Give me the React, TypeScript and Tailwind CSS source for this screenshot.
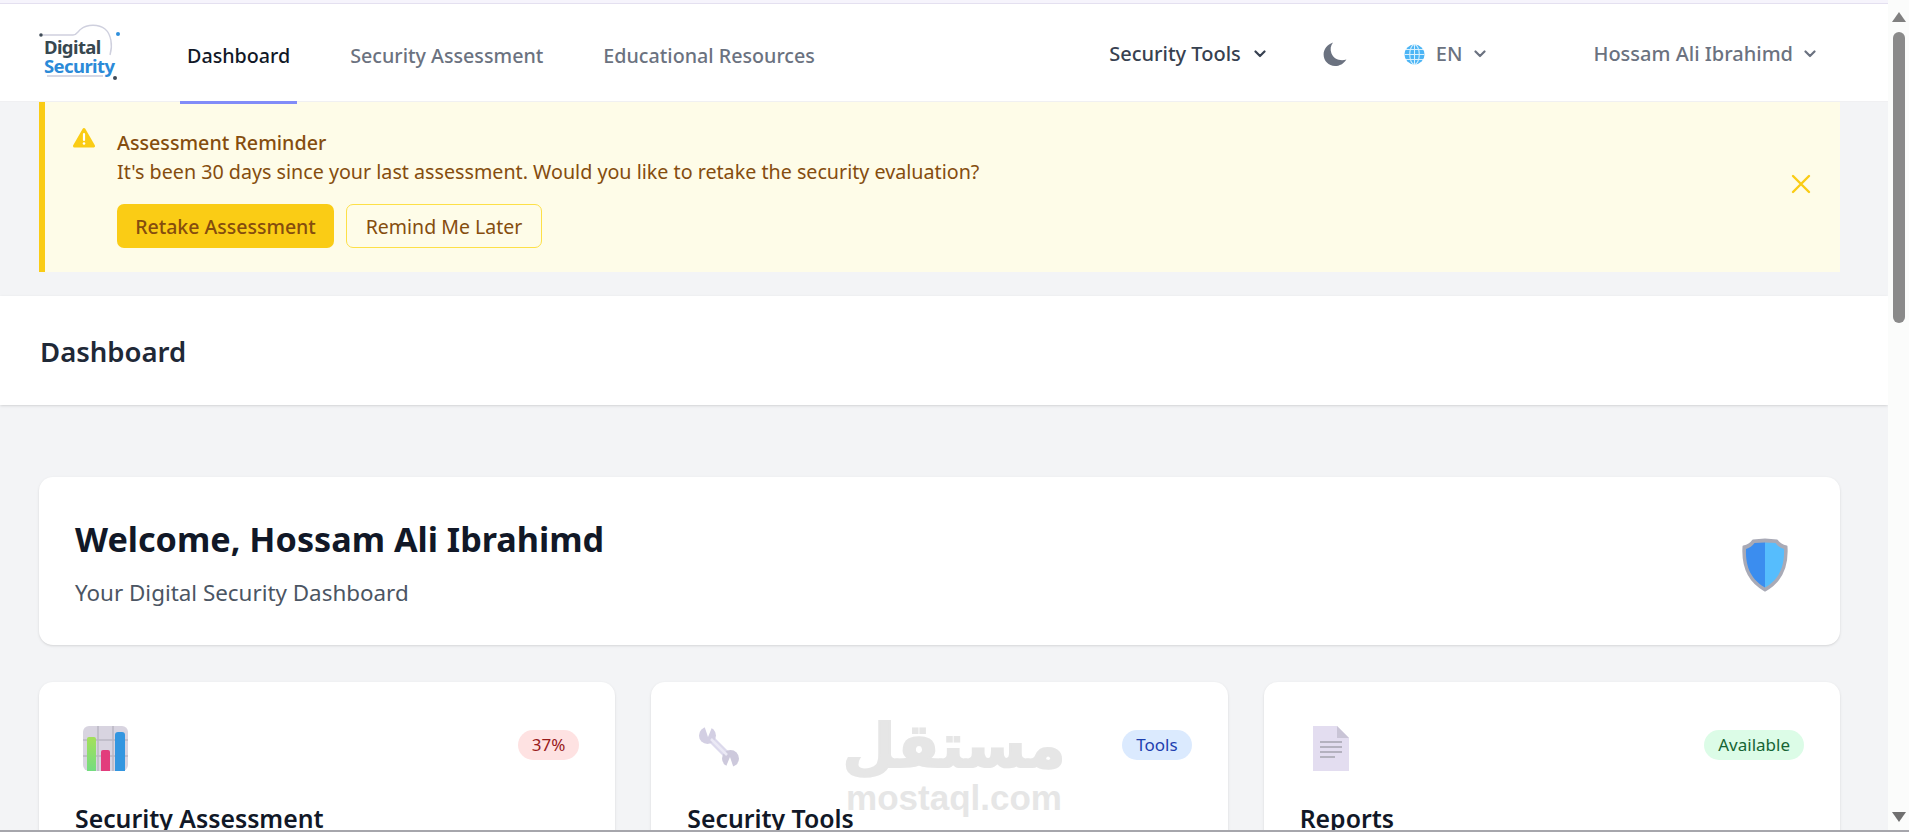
import { ReactNode } from 'react';

const font = { fontFamily: '"Noto Sans", "Open Sans", sans-serif' };

function Chevron({ className }: { className?: string }) {
  return (
    <svg viewBox="0 0 12 8" className={className} fill="none" stroke="currentColor" strokeWidth="2.2" strokeLinecap="round" strokeLinejoin="round">
      <path d="M1.5 1.5L6 6l4.5-4.5" />
    </svg>
  );
}

function Logo() {
  return (
    <div className="relative w-[84px] h-[60px] shrink-0">
      <svg viewBox="0 0 84 60" className="absolute inset-0 w-full h-full">
        <path d="M4 12H34C38 12 39 8 42 6C48 1 60 1 66 6C72 11 74 22 71 32" fill="none" stroke="#cfd0de" strokeWidth="1.4" />
        <path d="M8 53H64" stroke="#c9cbdc" strokeWidth="1.6" />
        <circle cx="2" cy="12" r="1.8" fill="#3f4b57" />
        <circle cx="79" cy="11" r="2" fill="#2f8fdc" />
        <circle cx="76" cy="55" r="2" fill="#3f4b57" />
      </svg>
      <div className="absolute left-[5px] top-[14px] font-bold tracking-[-0.6px]">
        <div className="text-[18.5px] h-[19px] leading-[19px] text-[#37474f]">Digital</div>
        <div className="text-[18.5px] h-[19px] leading-[19px] text-[#2b8ad8]">Security</div>
      </div>
    </div>
  );
}

function WarningIcon() {
  return (
    <svg viewBox="0 0 22 21" className="w-[22px] h-[22px] -mt-[1px]">
      <path d="M11 2L20.5 18.5H1.5Z" fill="#facc15" stroke="#facc15" strokeWidth="3" strokeLinejoin="round" />
      <path d="M11 6.5V12.5" stroke="#fff" strokeWidth="2.2" strokeLinecap="round" />
      <circle cx="11" cy="16" r="1.3" fill="#fff" />
    </svg>
  );
}

function GlobeIcon() {
  return (
    <svg viewBox="0 0 22 22" className="w-[21px] h-[21px]" fill="none">
      <circle cx="11" cy="11" r="10.5" fill="#4db5f5" />
      <g stroke="#d9f1fe" strokeWidth="1.1">
        <ellipse cx="11" cy="11" rx="5" ry="10.5" />
        <path d="M11 .5v21M.5 11h21M2 5.8h18M2 16.2h18" />
      </g>
    </svg>
  );
}

function MoonIcon() {
  return (
    <svg viewBox="0 0 24 24" className="w-[24px] h-[24px]">
      <path d="M10 0.5C4.2 2.6 0.6 7.2 0.6 12.6C0.6 19 5.6 24 12 24C16.6 24 20.6 21.6 23.4 17.4C17.4 19.6 10.6 17 8.4 11.2C7 7.4 7.6 3.6 10 0.5Z" fill="#6b7280" />
    </svg>
  );
}

function ShieldIcon() {
  return (
    <svg viewBox="0 0 46 54" className="w-[46px] h-[54px] mt-[7px]">
      <path d="M23 1.5L11 2.5C9 5.5 6 7.5 1.5 8.5C0.5 24 3.5 42 23 52.5C42.5 42 45.5 24 44.5 8.5C40 7.5 37 5.5 35 2.5Z" fill="#a9aab6" stroke="#a9aab6" strokeLinejoin="round" strokeWidth="2" />
      <path d="M23 4.5L12.5 5C10.5 8 7.5 10 4 11C3.5 25 6.5 40 23 49.5Z" fill="#3b8def" />
      <path d="M23 4.5L33.5 5C35.5 8 38.5 10 42 11C42.5 25 39.5 40 23 49.5Z" fill="#56bdfd" />
    </svg>
  );
}

function ChartIcon() {
  return (
    <svg viewBox="0 0 45 45" className="w-[45px] h-[45px] ml-[8px]">
      <defs>
        <linearGradient id="greenBar" x1="0" y1="0" x2="0" y2="1">
          <stop offset="0" stopColor="#a4e05a" />
          <stop offset="1" stopColor="#74dc80" />
        </linearGradient>
      </defs>
      <rect width="45" height="45" rx="6" fill="#d8d4e0" />
      <path d="M15 0v45M30 0v45M0 14h45M0 30h45" stroke="#b9b6c2" strokeWidth="1.5" />
      <path d="M4 13a2 2 0 012-2h5a2 2 0 012 2v32H4z" fill="url(#greenBar)" />
      <path d="M18 26a2 2 0 012-2h5a2 2 0 012 2v19H18z" fill="#e23d7c" />
      <path d="M32 9a3 3 0 013-3h4a3 3 0 013 3v36H32z" fill="#3396e0" />
    </svg>
  );
}

function WrenchIcon() {
  return (
    <svg viewBox="0 0 42 42" className="w-[42px] h-[42px] ml-[11px]">
      <path d="M10 10L32 32" stroke="#dcd9ec" strokeWidth="7" />
      <circle cx="9.5" cy="9.5" r="8.5" fill="#d3cfe3" />
      <circle cx="32.5" cy="32.5" r="8.5" fill="#cdc9dc" />
      <path d="M10 11L6 -1H15Z" fill="#fff" />
      <path d="M32 31L36 43H27Z" fill="#fff" />
      <path d="M13 13L29 29" stroke="#ebe9f5" strokeWidth="2.5" />
    </svg>
  );
}

function DocIcon() {
  return (
    <svg viewBox="0 0 36 45" className="w-[36px] h-[45px] ml-[13px]">
      <path d="M0 0H24L36 12V45H0Z" fill="#e3ddf0" />
      <path d="M24 0L36 12H24Z" fill="#c9c4d6" />
      <path d="M7 16H29M7 21H29M7 26H29" stroke="#a5a3ae" strokeWidth="1.5" />
      <path d="M7 31H22" stroke="#a5a3ae" strokeWidth="1.5" />
    </svg>
  );
}

function NavTab({ label, active }: { label: string; active?: boolean }) {
  return (
    <div className={`relative flex items-center h-full px-[7px] pt-[7px] text-[19.7px] font-medium ${active ? 'text-[#111827]' : 'text-[#6b7280]'}`}>
      {label}
      {active && <span className="absolute left-0 right-0 -bottom-[3px] h-[3px] bg-[#818cf8]" />}
    </div>
  );
}

function Badge({ className, children }: { className: string; children: ReactNode }) {
  return <span className={`mt-[4px] h-[30px] flex items-center rounded-full px-[14px] text-[17px] ${className}`}>{children}</span>;
}

function FeatureCard({ icon, badge, title }: { icon: ReactNode; badge: ReactNode; title: string }) {
  return (
    <div className="bg-white rounded-t-[14px] h-[200px] px-[36px] pt-[44px] shadow-sm">
      <div className="flex justify-between items-start h-[44px]">
        {icon}
        {badge}
      </div>
      <h3 className="mt-[32px] text-[24.8px] leading-[32px] font-semibold text-[#111827]">{title}</h3>
    </div>
  );
}

export default function App() {
  return (
    <div className="relative flex w-full h-screen overflow-hidden bg-[#f3f4f6]" style={font}>
      <div className="flex-1 min-w-0 h-full overflow-hidden">
        {/* Strip above the nav */}
        <div className="h-[4px] bg-[#f6f4fc] border-b border-[#e4e0f0]" />

        {/* Nav */}
        <nav className="flex items-center h-[98px] bg-white border-b border-[#f0f0f2] pl-[39px] pr-[72px]">
          <Logo />
          <div className="flex items-center h-full ml-[57px] gap-[46px]">
            <NavTab label="Dashboard" active />
            <NavTab label="Security Assessment" />
            <NavTab label="Educational Resources" />
          </div>
          <div className="ml-auto flex items-center mt-[3px] text-[20px] font-medium">
            <span className="text-[#374151]">Security Tools</span>
            <Chevron className="w-[12px] h-[8px] ml-[13px] text-[#374151]" />
            <span className="ml-[57px]"><MoonIcon /></span>
            <span className="ml-[57px]"><GlobeIcon /></span>
            <span className="ml-[11px] text-[#6b7280]">EN</span>
            <Chevron className="w-[12px] h-[8px] ml-[12px] text-[#6b7280]" />
            <span className="ml-[107px] text-[#6b7280]">Hossam Ali Ibrahimd</span>
            <Chevron className="w-[12px] h-[8px] ml-[11px] text-[#6b7280]" />
          </div>
        </nav>

        {/* Reminder */}
        <div className="ml-[39px] mr-[48px] h-[170px] flex bg-[#fefce8] border-l-[6px] border-[#facc15] pl-[28px] pr-[28px] pt-[26px]">
          <WarningIcon />
          <div className="ml-[22px] flex-1 text-[#854d0e]">
            <p className="text-[19.7px] leading-[30px] font-medium">Assessment Reminder</p>
            <p className="text-[19.7px] leading-[28px]">It's been 30 days since your last assessment. Would you like to retake the security evaluation?</p>
            <div className="flex gap-[12px] mt-[18px]">
              <button className="h-[44px] w-[217px] pt-[1px] rounded-[7px] bg-[#facc15] text-[19.5px] font-medium text-[#854d0e]">Retake Assessment</button>
              <button className="h-[44px] w-[196px] pt-[2px] rounded-[7px] border border-[#fde047] text-[19.5px] text-[#854d0e]">Remind Me Later</button>
            </div>
          </div>
          <svg viewBox="0 0 20 20" className="w-[20px] h-[20px] mt-[46px] mr-[1px]" stroke="#facc15" strokeWidth="2.4" strokeLinecap="round">
            <path d="M2 2l16 16M18 2L2 18" />
          </svg>
        </div>

        {/* Page header */}
        <header className="mt-[24px] h-[109px] flex items-center bg-white shadow-sm pl-[40px] pt-[2px]">
          <h1 className="text-[27.5px] font-semibold text-[#1f2937]">Dashboard</h1>
        </header>

        <main className="mt-[72px] pl-[39px] pr-[48px]">
          {/* Welcome */}
          <section className="h-[168px] flex items-center justify-between bg-white rounded-[14px] shadow-sm pl-[36px] pr-[52px]">
            <div className="pt-[3px]">
              <h2 className="text-[34.2px] leading-[44px] font-bold text-[#111827]">Welcome, Hossam Ali Ibrahimd</h2>
              <p className="mt-[17px] text-[22.4px] leading-[30px] text-[#4b5563]">Your Digital Security Dashboard</p>
            </div>
            <ShieldIcon />
          </section>

          {/* Feature cards */}
          <div className="grid grid-cols-3 gap-[36px] mt-[37px]">
            <FeatureCard icon={<ChartIcon />} title="Security Assessment" badge={<Badge className="bg-[#fee2e2] text-[#991b1b]">37%</Badge>} />
            <FeatureCard icon={<WrenchIcon />} title="Security Tools" badge={<Badge className="bg-[#dbeafe] text-[#1e40af]">Tools</Badge>} />
            <FeatureCard icon={<DocIcon />} title="Reports" badge={<Badge className="bg-[#dcfce7] text-[#166534]">Available</Badge>} />
          </div>
        </main>
      </div>

      {/* Scrollbar */}
      <div className="w-[21px] h-full shrink-0 flex flex-col items-center bg-[#fbfcfb] pt-[12px] pb-[10px]">
        <div className="w-0 h-0 border-x-[7px] border-x-transparent border-b-[10px] border-b-[#808080]" />
        <div className="w-[12px] h-[291px] mt-[10px] rounded-full bg-[#8a8a8a]" />
        <div className="mt-auto w-0 h-0 border-x-[7px] border-x-transparent border-t-[10px] border-t-[#707070]" />
      </div>

      {/* Watermark */}
      <div className="absolute left-[845px] top-[711px] w-[218px] flex flex-col items-center pointer-events-none text-[#e6e6e6]">
        <span className="text-[61px] leading-[69px] font-bold [-webkit-text-stroke:2px_#e6e6e6]" style={{ fontFamily: '"DejaVu Sans", sans-serif' }}>مستقل</span>
        <span className="text-[35px] leading-[36px] font-bold" style={{ fontFamily: '"Liberation Sans", sans-serif' }}>mostaql.com</span>
      </div>

      <div className="absolute left-0 right-0 bottom-0 h-[2px] bg-[#a6a6ac]" />
    </div>
  );
}
